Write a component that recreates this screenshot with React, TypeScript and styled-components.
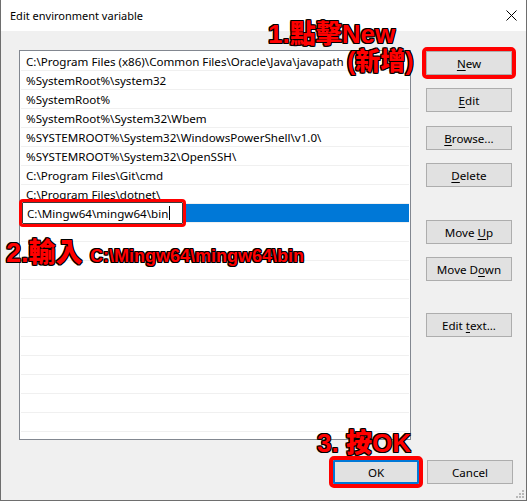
import React from 'react';
import styled, { createGlobalStyle, css } from 'styled-components';

const Global = createGlobalStyle`
  html, body { margin: 0; padding: 0; background: #ffffff; }
  body { font-family: "Noto Sans", "Segoe UI", sans-serif; }
`;

const uiFont = `"Noto Sans", "Segoe UI", "Liberation Sans", sans-serif`;
const markFont = `"Liberation Sans", Arial, "Noto Sans CJK TC", sans-serif`;

const Window = styled.div`
  position: relative;
  width: 527px;
  height: 501px;
  box-sizing: border-box;
  border: 1px solid #6e6e6e;
  border-top: none;
  background: #f0f0f0;
  display: flex;
  flex-direction: column;
  font-family: ${uiFont};
  font-size: 11.6px;
  color: #000;
  overflow: hidden;
`;

const TitleBar = styled.div`
  height: 31px;
  flex: none;
  background: #ffffff;
  display: flex;
  align-items: center;
  justify-content: space-between;
  padding: 0 9px 0 9px;
`;

const Title = styled.span`
  font-size: 11px;
  color: #000;
`;

const Body = styled.div`
  flex: 1;
  display: flex;
  flex-direction: column;
  padding: 19px 13px 0 18px;
`;

const Main = styled.div`
  display: flex;
  gap: 15px;
  align-items: flex-start;
`;

const ListBox = styled.div`
  width: 392px;
  height: 390px;
  box-sizing: border-box;
  border: 1px solid #828790;
  background: #ffffff;
  padding: 1px;
  display: flex;
  flex-direction: column;
`;

const Row = styled.div<{ $selected?: boolean }>`
  position: relative;
  height: 18px;
  flex: none;
  border-bottom: 1px solid #f0f0f0;
  padding-left: 5px;
  display: flex;
  align-items: center;
  white-space: nowrap;
  background: ${(p) => (p.$selected ? '#0078d7' : 'transparent')};
`;

const EditBox = styled.div`
  position: absolute;
  top: -2px;
  left: 1px;
  width: 161px;
  height: 22px;
  box-sizing: border-box;
  border: 1px solid #3c3c3c;
  background: #ffffff;
  padding-left: 4px;
  display: flex;
  align-items: center;
  outline: 3px solid #ff0000;
  outline-offset: 0px;
  border-radius: 1px;
`;

const Caret = styled.span`
  display: inline-block;
  width: 1px;
  height: 14px;
  background: #000;
  margin-left: 1px;
`;

const ButtonColumn = styled.div`
  display: flex;
  flex-direction: column;
  width: 86px;
`;

const Button = styled.div<{ $mt?: number; $highlight?: boolean; $default?: boolean }>`
  width: 86px;
  height: 24px;
  box-sizing: border-box;
  margin-top: ${(p) => p.$mt ?? 0}px;
  background: #e1e1e1;
  border: 1px solid #adadad;
  display: flex;
  align-items: center;
  justify-content: center;
  color: #000;
  white-space: pre;
  ${(p) =>
    p.$default &&
    css`
      border: 2px solid #0078d7;
    `}
  ${(p) =>
    p.$highlight &&
    css`
      outline: 4px solid #ff0000;
      outline-offset: 0px;
      border-radius: 1px;
    `}
`;

const Label = styled.span`
  white-space: pre;
`;

const Key = styled.span`
  text-decoration: underline;
  text-underline-offset: 2px;
`;

const Footer = styled.div`
  display: flex;
  justify-content: flex-end;
  gap: 8px;
  margin-top: 20px;
`;

const Mark = styled.div<{ $x: number; $y: number; $size: number }>`
  position: absolute;
  left: ${(p) => p.$x}px;
  top: ${(p) => p.$y}px;
  font-family: ${markFont};
  font-weight: 900;
  font-size: ${(p) => p.$size}px;
  line-height: 1;
  white-space: nowrap;
  color: #ff0000;
  text-shadow: 1px 0 #000, -1px 0 #000, 0 1px #000, 0 -1px #000, 1px 1px #000,
    -1px -1px #000, 1px -1px #000, -1px 1px #000;
`;

const SmallMark = styled.span`
  font-size: 18px;
`;

const Grip = styled.svg`
  position: absolute;
  right: 2px;
  bottom: 2px;
`;

const paths = [
  'C:\\Program Files (x86)\\Common Files\\Oracle\\Java\\javapath',
  '%SystemRoot%\\system32',
  '%SystemRoot%',
  '%SystemRoot%\\System32\\Wbem',
  '%SYSTEMROOT%\\System32\\WindowsPowerShell\\v1.0\\',
  '%SYSTEMROOT%\\System32\\OpenSSH\\',
  'C:\\Program Files\\Git\\cmd',
  'C:\\Program Files\\dotnet\\',
];

export default function App() {
  const empties = Array.from({ length: 11 });
  return (
    <>
      <Global />
      <Window>
        <TitleBar>
          <Title>Edit environment variable</Title>
          <svg width="11" height="11" viewBox="0 0 11 11">
            <path d="M0.5 0.5 L10.5 10.5 M10.5 0.5 L0.5 10.5" stroke="#000" strokeWidth="1" fill="none" />
          </svg>
        </TitleBar>
        <Body>
          <Main>
            <ListBox>
              {paths.map((p) => (
                <Row key={p}>{p}</Row>
              ))}
              <Row $selected>
                <EditBox>
                  C:\Mingw64\mingw64\bin
                  <Caret />
                </EditBox>
              </Row>
              {empties.map((_, i) => (
                <Row key={'e' + i} />
              ))}
            </ListBox>
            <ButtonColumn>
              <Button $mt={1} $highlight>
                <Label><Key>N</Key>ew</Label>
              </Button>
              <Button $mt={13}>
                <Label><Key>E</Key>dit</Label>
              </Button>
              <Button $mt={14}>
                <Label><Key>B</Key>rowse...</Label>
              </Button>
              <Button $mt={13}>
                <Label><Key>D</Key>elete</Label>
              </Button>
              <Button $mt={33}>
                <Label>{'Move '}<Key>U</Key>p</Label>
              </Button>
              <Button $mt={13}>
                <Label>{'Move D'}<Key>o</Key>wn</Label>
              </Button>
              <Button $mt={32}>
                <Label>{'Edit '}<Key>t</Key>ext...</Label>
              </Button>
            </ButtonColumn>
          </Main>
          <Footer>
            <Button $default $highlight>
              <Label>OK</Label>
            </Button>
            <Button>
              <Label>Cancel</Label>
            </Button>
          </Footer>
        </Body>

        <Mark $x={267} $y={21} $size={26}>
          1.點擊New
        </Mark>
        <Mark $x={346} $y={49} $size={25}>
          (新增)
        </Mark>
        <Mark $x={5} $y={240} $size={27}>
          2.輸入 <SmallMark>C:\Mingw64\mingw64\bin</SmallMark>
        </Mark>
        <Mark $x={316} $y={430} $size={26}>
          3. 按OK
        </Mark>

        <Grip width="9" height="9" viewBox="0 0 9 9">
          <g fill="#b8b8b8">
            <rect x="7" y="1" width="2" height="2" />
            <rect x="4" y="4" width="2" height="2" />
            <rect x="7" y="4" width="2" height="2" />
            <rect x="1" y="7" width="2" height="2" />
            <rect x="4" y="7" width="2" height="2" />
            <rect x="7" y="7" width="2" height="2" />
          </g>
        </Grip>
      </Window>
    </>
  );
}
